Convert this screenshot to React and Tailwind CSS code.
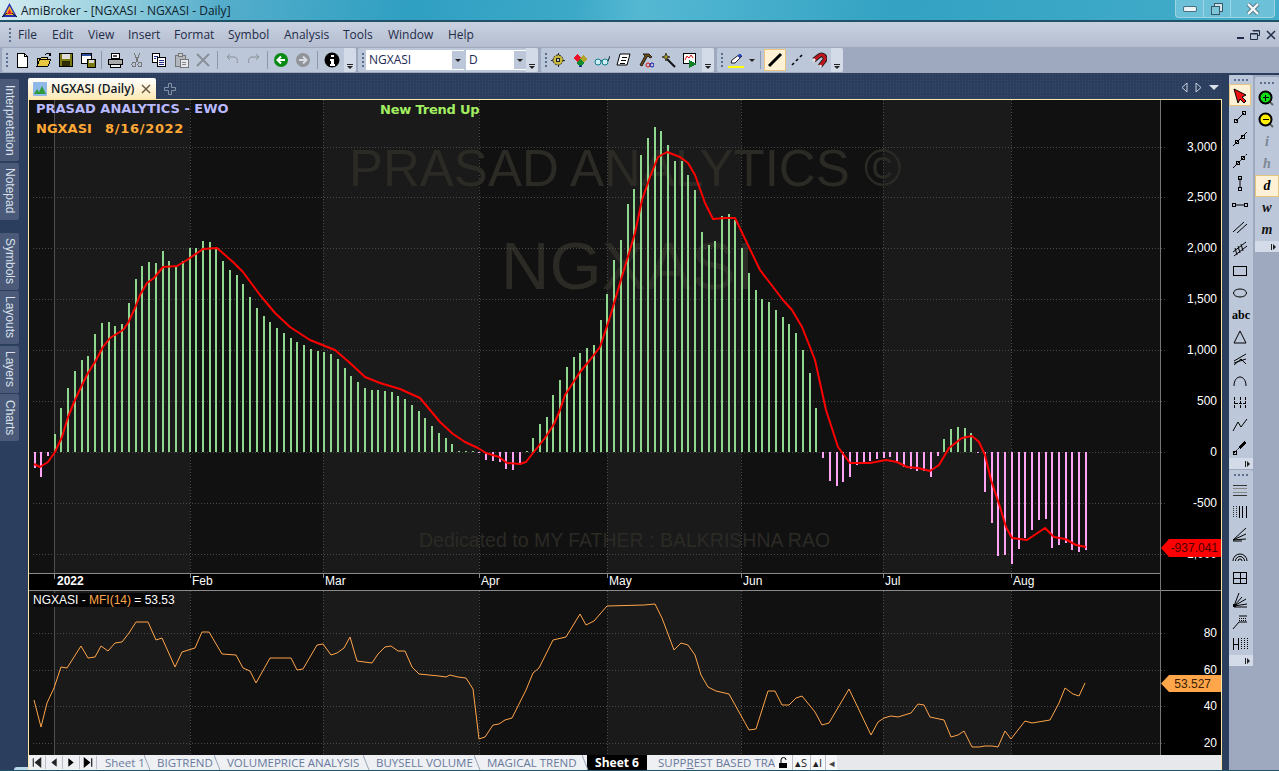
import React from 'react';

// y of the far end of every EWO bar, zero line sits at y=452
const BARS = [468,477,456,434,408,388,371,360,356,334,323,322,326,324,303,279,266,262,263,251,261,266,261,248,248,241,242,249,261,270,275,284,297,308,316,322,328,333,338,342,345,349,351,352,354,359,368,376,382,388,390,390,391,392,396,399,405,411,418,426,433,438,444,451,451,451,453,460,461,462,469,470,465,451,438,424,417,395,380,367,357,353,348,345,320,294,260,240,204,189,155,138,127,131,145,161,161,175,190,232,245,241,216,214,220,248,273,290,299,302,310,317,324,333,350,373,408,458,481,486,482,477,465,463,461,459,458,457,462,467,469,471,471,477,456,439,429,427,428,433,453,492,523,556,555,564,549,538,530,520,519,548,545,543,550,552,550];

const SIGNAL = '34,464 40,467 48,462 55,452 62,437 68,417 75,400 82,385 88,373 95,362 103,347 110,338 123,330 128,323 135,308 140,295 147,283 154,278 163,267 177,266 187,260 203,249 217,248 233,262 243,272 260,295 275,313 290,327 310,340 335,350 350,363 365,377 380,383 400,389 420,398 440,422 453,434 465,442 478,448 486,453 499,457 507,463 520,464 526,462 533,453 545,438 554,424 560,410 565,395 580,372 590,360 600,347 610,317 623,273 635,233 642,200 650,177 658,157 667,152 680,157 688,163 695,175 705,203 713,219 725,218 735,218 747,243 760,270 770,283 783,300 792,310 802,327 808,342 815,360 826,410 838,447 850,463 870,463 886,460 897,462 907,467 918,468 930,471 939,465 949,448 962,438 972,436 979,442 985,455 991,480 1000,507 1006,527 1012,538 1027,540 1045,528 1054,537 1065,539 1076,545 1086,547';

const MFI = '34,700 41,727 47,703 54,688 61,667 67,668 81,646 88,658 95,657 101,646 108,651 115,643 122,642 129,633 136,622 148,622 156,640 162,638 175,667 182,652 195,648 202,632 209,632 222,654 236,655 243,668 250,671 256,683 270,658 291,658 297,670 303,669 317,645 323,644 331,655 337,653 344,648 350,637 357,661 372,663 378,654 385,647 391,646 398,651 405,651 412,667 419,674 429,675 439,676 446,677 450,675 458,677 466,678 473,689 479,739 485,737 493,725 499,724 505,720 512,718 526,690 533,673 539,668 553,640 566,637 580,614 586,625 594,621 607,606 644,605 655,604 662,618 674,650 681,643 688,645 695,655 701,675 708,687 716,691 729,694 749,730 756,729 768,691 775,691 782,705 789,705 796,698 802,696 815,712 822,725 829,723 849,689 871,735 878,722 884,718 891,716 898,717 911,713 918,704 924,705 930,717 944,720 951,737 958,735 964,731 972,747 979,747 985,746 992,746 998,747 1005,731 1011,739 1025,721 1032,723 1050,720 1059,703 1065,688 1073,694 1079,696 1085,683';

const MONTHS = [[190, 'Feb'], [323, 'Mar'], [479, 'Apr'], [607, 'May'], [741, 'Jun'], [883, 'Jul'], [1011, 'Aug']];
const DARK_BANDS = [[29, 54], [190, 323], [479, 607], [741, 883], [1011, 1160]];
const CHART_FONT = "font-['Liberation_Sans',sans-serif]";

function Grip({ vertical }) {
  return (
    <div className={vertical ? 'flex h-[9px] items-center justify-center gap-[2px]' : 'flex w-[9px] flex-col items-center justify-center gap-[2px]'}>
      {[0, 1, 2, 3].map((i) => <span key={i} className="h-[2px] w-[2px] bg-[#5d6f8e]" />)}
    </div>
  );
}

function Chevron({ className }) {
  return (
    <div className={`flex w-[12px] flex-col items-center justify-end self-stretch rounded-r-[2px] bg-[#d3dae8] pb-[3px] ${className || ''}`}>
      <span className="mb-[1px] h-[1px] w-[6px] bg-[#222]" />
      <span className="h-0 w-0 border-x-[3px] border-t-[3px] border-x-transparent border-t-[#222]" />
    </div>
  );
}

function SideChevron() {
  return (
    <div className="flex h-[11px] items-center justify-end gap-[1px] bg-[#d3dae8] pr-[3px]">
      <span className="h-[6px] w-[1px] bg-[#222]" />
      <span className="h-0 w-0 border-y-[3px] border-l-[3px] border-y-transparent border-l-[#222]" />
    </div>
  );
}

function Sep({ wide }) {
  return <span className={`h-[18px] w-[1px] bg-[#8d99ae] ${wide ? 'mx-[3px]' : 'mx-[2px]'}`} />;
}

function Icon({ children, w = 22, active }) {
  return (
    <div
      className={`flex h-[22px] shrink-0 items-center justify-center ${active ? 'border border-[#e6c67e] bg-[#fff1d6]' : ''}`}
      style={{ width: w }}
    >
      <svg width="16" height="16" viewBox="0 0 16 16" fill="none" shapeRendering="crispEdges">{children}</svg>
    </div>
  );
}

function Toolbar({ children, className }) {
  return <div className={`flex h-[24px] items-center rounded-[2px] bg-[#bcc7d9] ${className}`}>{children}</div>;
}

function Combo({ text, width }) {
  return (
    <div className="flex h-[20px] items-center bg-white pl-[3px] text-[12px] text-[#1d2a55]" style={{ width }}>
      <span className="flex-1">{text}</span>
      <span className="flex h-[18px] w-[12px] items-center justify-center bg-[#bcc7d9]">
        <span className="h-0 w-0 border-x-[3px] border-t-[3px] border-x-transparent border-t-[#222]" />
      </span>
    </div>
  );
}

function TopToolbars() {
  return (
    <div className="flex h-[26px] items-center bg-[#9ea9c0] pl-[2px]">
      <Toolbar className="w-[354px]">
        <Grip />
        <Icon><path d="M3 1h7l3 3v11H3z" fill="#fff" stroke="#000" /><path d="M10 1v3h3" stroke="#000" /></Icon>
        <Icon><path d="M1 6h4l1-1h5v2H4L1 14z" fill="#f2d860" stroke="#000" /><path d="M4 7h11l-3 7H1z" fill="#e8c840" stroke="#000" /><path d="M9 3l2-2h3v3M13 1v3" stroke="#000" /></Icon>
        <Icon><rect x="1.5" y="1.5" width="13" height="13" fill="#7a7a10" stroke="#000" /><rect x="4" y="2" width="8" height="5" fill="#ddd" /><rect x="4" y="9" width="8" height="5" fill="#2c2c00" /></Icon>
        <Icon><rect x="1.5" y="1.5" width="10" height="10" fill="#fff" stroke="#000" /><rect x="2" y="2" width="9" height="2" fill="#2b4fa0" /><rect x="7.5" y="7.5" width="8" height="8" fill="#7a7a10" stroke="#000" /><rect x="9" y="8" width="5" height="3" fill="#ddd" /></Icon>
        <Sep />
        <Icon><path d="M4 1h8v5H4z" fill="#fff" stroke="#000" /><path d="M1 7h14v5H1z" fill="#aaa" stroke="#000" /><path d="M3 12h10v3H3z" fill="#eee" stroke="#000" /><path d="M6 3h4M6 4h4" stroke="#555" /></Icon>
        <Icon><path d="M5 1l4 9M11 1L7 10" stroke="#777" /><circle cx="5" cy="12.5" r="2" stroke="#777" /><circle cx="11" cy="12.5" r="2" stroke="#777" /></Icon>
        <Icon><path d="M1.5 1.5h7v9h-7z" fill="#fff" stroke="#000" /><path d="M6.5 5.5h8v9h-8z" fill="#fff" stroke="#000" /><path d="M3 4h4M3 6h2M8 8h5M8 10h5M8 12h5" stroke="#1a2a80" /></Icon>
        <Icon><path d="M2 3h10v11H2z" fill="#b3b7be" stroke="#777" /><path d="M5 1h4v3H5z" fill="#ccc" stroke="#777" /><path d="M7 7h8v8H7z" fill="#e6e8ec" stroke="#777" /><path d="M9 10h4M9 12h4" stroke="#888" /></Icon>
        <Icon><path d="M2 2l12 12M14 2L2 14" stroke="#8a8f98" strokeWidth="2" shapeRendering="auto" /></Icon>
        <Sep wide />
        <Icon><path d="M3 5l3-3M3 5l3 3M3 5h7c3 0 4 3 3 6" stroke="#8b8f98" shapeRendering="auto" /></Icon>
        <Icon><path d="M13 5l-3-3M13 5l-3 3M13 5H6c-3 0-4 3-3 6" stroke="#8b8f98" shapeRendering="auto" /></Icon>
        <Sep />
        <Icon><circle cx="8" cy="8" r="7" fill="#0a8a14" shapeRendering="auto" /><path d="M12 8H5M8 4.5L4.5 8 8 11.5" stroke="#fff" strokeWidth="2" shapeRendering="auto" /></Icon>
        <Icon><circle cx="8" cy="8" r="7" fill="#909499" shapeRendering="auto" /><path d="M4 8h7M8 4.5L11.5 8 8 11.5" stroke="#d9dce2" strokeWidth="2" shapeRendering="auto" /></Icon>
        <Sep wide />
        <Icon><circle cx="8" cy="8" r="7.5" fill="#000" shapeRendering="auto" /><path d="M7 3h2.5v2H7zM6 7h3.5v5H11v1.5H6V12h1V8.5H6z" fill="#fff" /></Icon>
        <div className="flex-1" />
        <Chevron />
      </Toolbar>
      <Toolbar className="ml-[2px] w-[180px]">
        <div className="w-[8px]"><Grip /></div>
        <Combo text="NGXASI" width={98} />
        <div className="w-[2px]" />
        <Combo text="D" width={60} />
        <div className="flex-1" />
        <Chevron />
      </Toolbar>
      <Toolbar className="ml-[3px] w-[173px]">
        <div className="w-[6px]"><Grip /></div>
        <Icon><circle cx="8" cy="8" r="5" fill="#c9b93a" stroke="#222" strokeDasharray="2 1" shapeRendering="auto" /><circle cx="8" cy="8" r="2" fill="#bcc7d9" stroke="#222" /><path d="M8 1v2M8 13v2M1 8h2M13 8h2" stroke="#222" /></Icon>
        <Icon><path d="M5 2l4 4-4 4-4-4z" fill="#e8122a" /><path d="M11 3l4 4-4 4-4-4z" fill="#b2a226" /><path d="M8 7l4 4-4 4-4-4z" fill="#0d8a2e" /><path d="M8 13l2 2H6z" fill="#1a2ca0" /></Icon>
        <Icon><circle cx="4" cy="10" r="3" fill="#cfeef2" stroke="#0e7f8a" shapeRendering="auto" /><circle cx="11" cy="10" r="3" fill="#cfeef2" stroke="#0e7f8a" shapeRendering="auto" /><path d="M14 9l2-5M7 9h1" stroke="#123" shapeRendering="auto" /></Icon>
        <Icon><path d="M4 2h10l-3 11H1z" fill="#fff" stroke="#000" shapeRendering="auto" /><path d="M6 5h5M5 8h5M4 11h5" stroke="#000" /></Icon>
        <Icon><path d="M5 2h6l3 3-2 1-2-2-1 1-5 9-2-1 5-9z" fill="#6b4a10" stroke="#222" shapeRendering="auto" /><circle cx="10" cy="13" r="2" stroke="#d11" shapeRendering="auto" /><circle cx="14" cy="13" r="2" stroke="#11a" shapeRendering="auto" /></Icon>
        <Icon><path d="M7 7l8 8" stroke="#111" strokeWidth="2" shapeRendering="auto" /><path d="M6 1l1 3 3 1-3 1-1 3-1-3-3-1 3-1z" fill="#a89a20" stroke="#443" shapeRendering="auto" /></Icon>
        <Icon><rect x="1.5" y="1.5" width="12" height="10" fill="#fff" stroke="#000" /><path d="M3 8l2-4 2 2 2-3 2 3" stroke="#d11" shapeRendering="auto" /><path d="M7 8l8 4-8 4z" fill="#12802a" /></Icon>
        <div className="flex-1" />
        <Chevron />
      </Toolbar>
      <Toolbar className="ml-[3px] w-[126px]">
        <div className="w-[8px]"><Grip /></div>
        <Icon><path d="M3 11l1-3 8-6 2 2-7 7z" fill="#fff" stroke="#223" shapeRendering="auto" /><path d="M9 4l2 2 3-2-2-2z" fill="#2a4ac0" /><rect x="0" y="14" width="16" height="2" fill="#ffff00" /></Icon>
        <div className="flex w-[10px] justify-center"><span className="h-0 w-0 border-x-[3px] border-t-[3px] border-x-transparent border-t-[#222]" /></div>
        <span className="mx-[3px] h-[18px] w-[1px] bg-[#8d99ae]" />
        <Icon active><path d="M2 14L14 2" stroke="#000" strokeWidth="3" shapeRendering="auto" /></Icon>
        <Icon><path d="M3 13l2-2M7 9l2-2M11 5l2-2" stroke="#000" strokeWidth="1.6" shapeRendering="auto" /></Icon>
        <Icon>
          <path d="M3 8L8 4a3.500 3.500 0 0 1 5 5l-4 5" stroke="#222" strokeWidth="5" shapeRendering="auto" />
          <path d="M3 8L8 4a3.500 3.500 0 0 1 5 5l-4 5" stroke="#c2141c" strokeWidth="3" shapeRendering="auto" />
          <path d="M2 9l2-2M9 15l1-2" stroke="#e8e8e8" strokeWidth="2.500" shapeRendering="auto" />
        </Icon>
        <div className="flex-1" />
        <Chevron />
      </Toolbar>
    </div>
  );
}

function SheetTabs() {
  const tabs = [
    ['Sheet 1', 52],
    ['BIGTREND', 70],
    ['VOLUMEPRICE ANALYSIS', 149],
    ['BUYSELL VOLUME', 111],
    ['MAGICAL TREND', 108],
  ];
  return (
    <div className="flex h-[15px] items-center overflow-hidden whitespace-nowrap bg-[#eef0f4] text-[11.5px] leading-[15px] text-[#687a9c]">
      {[
        <path key="a" d="M2 2v8M9 2L4 6l5 4z" fill="#222" stroke="#222" />,
        <path key="b" d="M8 2L3 6l5 4z" fill="#222" />,
        <path key="c" d="M3 2l5 4-5 4z" fill="#000" />,
        <path key="d" d="M9 2v8M2 2l5 4-5 4z" fill="#000" stroke="#000" />,
      ].map((p, i) => (
        <svg key={i} width="17" height="13" viewBox="-2 0 15 12" className="shrink-0 border-r border-[#b9bec8]">{p}</svg>
      ))}
      {tabs.map(([name, w]) => (
        <div key={name} className="relative shrink-0 pl-[8px]" style={{ width: w }}>
          {name}
          <svg width="7" height="15" viewBox="0 0 7 15" className="absolute right-[-2px] top-0"><path d="M0 0l6 15" stroke="#9aa4b5" fill="none" /></svg>
        </div>
      ))}
      <div className="h-[15px] w-[60px] shrink-0 bg-black text-center text-[12px] font-bold text-white">Sheet 6</div>
      <div className="w-[128px] shrink-0 overflow-hidden pl-[11px]">SUPP<span className="underline">R</span>EST BASED TRA</div>
      <div className="flex h-[15px] items-center gap-[3px] bg-[#f6f7f9] pl-[2px] text-[11px] text-[#222]">
        <svg width="12" height="12" viewBox="0 0 12 12"><rect x="2" y="6" width="8" height="5" fill="#000" /><path d="M4 6V3a2.5 2.5 0 0 1 5 0" stroke="#000" fill="none" /></svg>
        <span className="border-l border-[#b9bec8] pl-[2px]">▴S</span>
        <span className="border-l border-[#b9bec8] pl-[2px]">▴I</span>
        <span className="border-l border-[#b9bec8] pl-[3px] pr-[2px] text-[#444]">◂</span>
      </div>
      <div className="h-full flex-1 bg-[#e6e8ec]" />
    </div>
  );
}

function Bands({ y, h }) {
  return (
    <>
      <rect x="29" y={y} width="1131" height={h} fill="#1a1a1a" />
      {DARK_BANDS.map(([a, b]) => <rect key={a} x={a} y={y} width={b - a} height={h} fill="#111111" />)}
      <line x1="54.5" x2="54.5" y1={y} y2={y + h} stroke="#4f4f4f" />
      {MONTHS.map(([x]) => <line key={x} x1={x + 0.5} x2={x + 0.5} y1={y} y2={y + h} stroke="#4a4a4a" strokeDasharray="1 2" />)}
    </>
  );
}

function Levels({ rows }) {
  return rows.map(([y, label]) => (
    <g key={label}>
      <line x1="33" x2="1165" y1={y + 0.5} y2={y + 0.5} stroke="#4a4a4a" strokeDasharray="1 2" />
      <text x="1217" y={y + 4} textAnchor="end" fontSize="12" fill="#fff">{label}</text>
    </g>
  ));
}

function MainPane() {
  return (
    <svg viewBox="29 100 1192 473" className={`block h-[473px] w-[1192px] shrink-0 bg-black ${CHART_FONT}`}>
      <Bands y={100} h={473} />
      <g fill="#2b2a25">
        <text x="349" y="186" fontSize="51">PRASAD ANALYTICS ©</text>
        <text x="501" y="289" fontSize="67">NGXASI</text>
        <text x="419" y="547" fontSize="19.500">Dedicated to MY FATHER : BALKRISHNA RAO</text>
      </g>
      <Levels rows={[[147, '3,000'], [197, '2,500'], [248, '2,000'], [299, '1,500'], [350, '1,000'], [401, '500'], [452, '0'], [503, '-500'], [554, '-1,000']]} />
      {BARS.map((v, i) => {
        const x = Math.round(34.5 + i * 6.74) - 1;
        return v < 452
          ? <rect key={i} x={x} y={v} width="2" height={452 - v} fill="#8fd68f" />
          : <rect key={i} x={x} y={452} width="2" height={v - 452} fill="#ffa4f4" />;
      })}
      <polyline points={SIGNAL} fill="none" stroke="#ff0000" strokeWidth="2" strokeLinejoin="round" />
      <path d="M1221 539v18h-52l-8-9 8-9z" fill="#ff0000" />
      <text x="1218" y="552" textAnchor="end" fontSize="12" fill="#4a0000">-937.041</text>
      <line x1="1160.5" x2="1160.5" y1="100" y2="573" stroke="#757575" />
      <g fontFamily="'DejaVu Sans', sans-serif" fontWeight="700" fontSize="13">
        <text x="36" y="113" fill="#b9b9ff">PRASAD ANALYTICS - EWO</text>
        <text x="36" y="133" fill="#ffa836">NGXASI<tspan x="105" letterSpacing="0.7">8/16/2022</tspan></text>
        <text x="380" y="114" fill="#a3ef62" letterSpacing="-0.2">New Trend Up</text>
      </g>
    </svg>
  );
}

function DateAxis() {
  return (
    <svg viewBox="29 573 1192 18" className={`block h-[18px] w-[1192px] shrink-0 bg-black ${CHART_FONT}`}>
      <line x1="29" x2="1160" y1="573.5" y2="573.5" stroke="#8a8a8a" />
      <line x1="29" x2="1221" y1="590.5" y2="590.5" stroke="#8a8a8a" />
      <line x1="1160.5" x2="1160.5" y1="573" y2="591" stroke="#757575" />
      <line x1="54.5" x2="54.5" y1="573" y2="579" stroke="#8a8a8a" />
      <text x="57" y="585" fontSize="12" fontWeight="700" fill="#fff">2022</text>
      {MONTHS.map(([x, m]) => (
        <g key={m}>
          <line x1={x + 0.5} x2={x + 0.5} y1="573" y2="578" stroke="#8a8a8a" />
          <text x={x + 2} y="585" fontSize="12" fill="#fff">{m}</text>
        </g>
      ))}
    </svg>
  );
}

function MfiPane() {
  return (
    <svg viewBox="29 591 1192 164" className={`block h-[164px] w-[1192px] shrink-0 bg-black ${CHART_FONT}`}>
      <Bands y={591} h={164} />
      <Levels rows={[[633, '80'], [670, '60'], [706, '40'], [743, '20']]} />
      <polyline points={MFI} fill="none" stroke="#ffa54a" strokeWidth="1" strokeLinejoin="round" />
      <rect x="33" y="593" width="139" height="14" fill="#050505" />
      <text x="33" y="604" fontSize="12" fill="#fff">NGXASI - <tspan fill="#ffa54a">MFI(14)</tspan> = 53.53</text>
      <path d="M1221 675v17h-52l-8-8.500 8-8.500z" fill="#ffa54a" />
      <text x="1211" y="688" textAnchor="end" fontSize="12" fill="#3a2000">53.527</text>
      <line x1="1160.5" x2="1160.5" y1="591" y2="755" stroke="#757575" />
    </svg>
  );
}

function LeftDock() {
  const groups = [
    [['Interpretation', 82], ['Notepad', 57]],
    [['Symbols', 57], ['Layouts', 53], ['Layers', 47], ['Charts', 47]],
  ];
  return (
    <div className="flex w-[28px] shrink-0 flex-col pt-[6px]">
      {groups.map((tabs, g) => (
        <div key={g} className={`flex flex-col gap-[1.5px] ${g ? 'mt-[13px]' : ''}`}>
          {tabs.map(([name, h]) => (
            <div
              key={name}
              className={`flex w-[19px] items-center justify-center rounded-r-[2px] bg-[#4a5a78] text-[12px] text-[#d9e0ec] [writing-mode:vertical-rl] ${CHART_FONT}`}
              style={{ height: h }}
            >
              {name}
            </div>
          ))}
        </div>
      ))}
      <div className="ml-[14px] mt-auto h-[3px] w-[14px] rounded-tl-full bg-[#b9d9e8]" />
    </div>
  );
}

function DrawTools() {
  const s = { stroke: '#000', fill: 'none', shapeRendering: 'auto' };
  return (
    <div className="w-[24px] overflow-hidden rounded-t-[2px] bg-[#bcc7d9]">
      <Grip vertical />
      <Icon active><path d="M2 2l12 6-4 2 4 4-2 2-4-4-2 4z" fill="#ee1111" stroke="#000" shapeRendering="auto" /></Icon>
      <Icon><path d="M4 12l8-8" {...s} /><rect x="2.500" y="10.500" width="3" height="3" {...s} /><rect x="10.500" y="2.500" width="3" height="3" {...s} /></Icon>
      <Icon><path d="M1 15L15 1" {...s} /><rect x="3.500" y="9.500" width="3" height="3" {...s} /><rect x="9.500" y="4.500" width="3" height="3" {...s} /></Icon>
      <Icon><path d="M1 15L15 1" {...s} strokeDasharray="5 1" /><rect x="4.500" y="8.500" width="3" height="3" {...s} /><rect x="9.500" y="3.500" width="3" height="3" {...s} /></Icon>
      <Icon><path d="M8 3v10" {...s} /><rect x="6.500" y="1.500" width="3" height="3" {...s} /><rect x="6.500" y="12.500" width="3" height="3" {...s} /></Icon>
      <Icon><path d="M3 8h10" {...s} /><rect x="0.500" y="6.500" width="3" height="3" {...s} /><rect x="12.500" y="6.500" width="3" height="3" {...s} /></Icon>
      <Icon><path d="M1 13L12 3M5 14L15 5" {...s} /></Icon>
      <Icon><path d="M1 11L14 1M2 15L15 5M3 7l2 7M6 5l2 7M9 3l2 7" {...s} /></Icon>
      <Icon><rect x="1.500" y="3.500" width="13" height="9" stroke="#000" /></Icon>
      <Icon><ellipse cx="8" cy="8" rx="6.500" ry="4" {...s} /></Icon>
      <div className="flex h-[22px] items-center justify-center font-['Liberation_Serif',serif] text-[12px] font-bold leading-none text-black">abc</div>
      <Icon><path d="M8 2l6 12H2z" {...s} /></Icon>
      <Icon><path d="M2 10L14 3M2 12l12-4M2 14l7-6 5 5" {...s} /></Icon>
      <Icon><path d="M2 13c0-12 12-12 12 0" {...s} /></Icon>
      <Icon><path d="M2.500 2v12M13.500 2v12M8 2v12M3 8h10" stroke="#000" strokeDasharray="3 1" /></Icon>
      <Icon><path d="M1 14l5-9 3 5 6-8" {...s} /></Icon>
      <Icon><path d="M2 14l5-5" {...s} strokeDasharray="2 1" /><path d="M6 8l6-6 2 2-6 6z" fill="#000" /><rect x="1.500" y="12.500" width="3" height="3" {...s} /></Icon>
      <SideChevron />
    </div>
  );
}

function GridTools() {
  const s = { stroke: '#000', fill: 'none', shapeRendering: 'auto' };
  return (
    <div className="mt-[1px] w-[24px] overflow-hidden rounded-t-[2px] bg-[#bcc7d9]">
      <Grip vertical />
      <Icon><path d="M1 3h14M1 13h14" stroke="#333" /><path d="M1 6.500h14M1 10h14" stroke="#888" /></Icon>
      <Icon><path d="M1 2v12M4 2v12" stroke="#333" strokeDasharray="1 1" /><path d="M7 2v12M10 2v12M14 2v12" stroke="#000" /></Icon>
      <Icon><path d="M1 14L14 2M1 14l13-6M1 14l13-1M1 15h9" {...s} /></Icon>
      <Icon><path d="M1 13a7 7 0 0 1 14 0M3.500 13a4.500 4.500 0 0 1 9 0M6 13a2 2 0 0 1 4 0" {...s} /></Icon>
      <Icon><rect x="1.500" y="2.500" width="13" height="11" stroke="#000" /><path d="M8 3v10M2 8h12" stroke="#000" /></Icon>
      <Icon><path d="M2 14L7 1M2 14l8-9M2 14l12-7M2 14l13-2M2 15h13" {...s} /><rect x="1" y="12" width="3" height="3" fill="#000" /></Icon>
      <Icon><path d="M1 15l6-7h8M7 2h8" {...s} /><path d="M7 4h8M7 6h8" stroke="#000" strokeDasharray="1 1" /></Icon>
      <Icon><path d="M1 2v12M6 2v12M1 8h5" stroke="#000" /><path d="M9 2v12M12 2v12M15 2v12" stroke="#000" strokeDasharray="1 1" /></Icon>
      <SideChevron />
    </div>
  );
}

function ZoomTools() {
  const letter = (t, color) => (
    <span className={`font-['Liberation_Serif',serif] text-[14px] font-bold italic leading-none ${color}`}>{t}</span>
  );
  return (
    <div className="w-[24px] overflow-hidden rounded-t-[2px] bg-[#bcc7d9]">
      <div className="h-[1px]" />
      <Grip vertical />
      <Icon><path d="M12 12l3 3" stroke="#666" strokeWidth="2" shapeRendering="auto" /><circle cx="7.500" cy="7.500" r="6" fill="#11e011" stroke="#000" strokeWidth="2" shapeRendering="auto" /><path d="M4.500 7.500h6M7.500 4.500v6" stroke="#000" /></Icon>
      <Icon><path d="M12 12l3 3" stroke="#666" strokeWidth="2" shapeRendering="auto" /><circle cx="7.500" cy="7.500" r="6" fill="#ffee00" stroke="#000" strokeWidth="2" shapeRendering="auto" /><path d="M4.500 7.500h6" stroke="#000" /></Icon>
      <div className="flex h-[22px] items-center justify-center">{letter('i', 'text-[#7d8694]')}</div>
      <div className="flex h-[22px] items-center justify-center">{letter('h', 'text-[#7d8694]')}</div>
      <div className="flex h-[22px] items-center justify-center border border-[#e6c67e] bg-[#fff1d6]">{letter('d', 'text-black')}</div>
      <div className="flex h-[22px] items-center justify-center">{letter('w', 'text-[#111]')}</div>
      <div className="flex h-[22px] items-center justify-center">{letter('m', 'text-[#111]')}</div>
      <SideChevron />
    </div>
  );
}

export default function App() {
  return (
    <div className="flex h-[771px] w-[1279px] flex-col overflow-hidden bg-[#2c3e5e] font-['Open_Sans','Liberation_Sans',sans-serif] text-[12px]">
      {/* window frame */}
      <div className="flex h-[22px] shrink-0 items-start border-b-2 border-[#1f5266] bg-[linear-gradient(100deg,#d5ecf0_0%,#97d0df_9%,#55aecb_17%,#2f9fc2_32%,#3da9c8_45%,#55b8d3_50%,#33a2c3_70%,#44adca_100%)]">
        <svg width="17" height="17" viewBox="0 0 17 17" className="ml-[1px] mt-[2px] shrink-0">
          <path d="M8.500 1L16 15H1z" fill="#2632b5" />
          <path d="M8.500 4l5 9h-10z" fill="#f0b020" />
          <path d="M8.500 7l2.500 5H6z" fill="#e02030" />
          <path d="M1 15l5-4M16 15l-5-4" stroke="#111" />
        </svg>
        <div className="ml-[3px] mt-[3px] text-[12px] leading-[15px] text-[#10202a]">AmiBroker - [NGXASI - NGXASI - Daily]</div>
        <div className="ml-auto mr-[4px] flex h-[18px] w-[100px] overflow-hidden rounded-b-[4px] border border-t-0 border-[#9fd4e2] bg-[#6cc0d8]">
          <div className="flex w-[28px] items-center justify-center border-r border-[#9fd4e2]"><span className="h-[4px] w-[12px] rounded-[1px] bg-[#eef4f6] ring-1 ring-[#4a6f80]" /></div>
          <div className="flex w-[27px] items-center justify-center border-r border-[#9fd4e2]">
            <svg width="12" height="12" viewBox="0 0 12 12"><rect x="3.500" y="0.500" width="8" height="8" fill="#cfe3ea" stroke="#3a5a6a" /><rect x="0.500" y="3.500" width="8" height="8" fill="#7ec6da" stroke="#3a5a6a" /></svg>
          </div>
          <div className="flex flex-1 items-center justify-center">
            <svg width="14" height="12" viewBox="0 0 14 12"><path d="M2 1l10 10M12 1L2 11" stroke="#3a5a6a" strokeWidth="4" /><path d="M2 1l10 10M12 1L2 11" stroke="#eef4f6" strokeWidth="2.500" /></svg>
          </div>
        </div>
      </div>

      {/* menu */}
      <div className="flex h-[25px] shrink-0 items-center bg-[linear-gradient(#c9d1e1,#b4bed0)] pl-[5px] text-[#1f2c48]">
        <Grip />
        <div className="ml-[4px] flex">
          {[['File', 34], ['Edit', 36], ['View', 40], ['Insert', 46], ['Format', 54], ['Symbol', 56], ['Analysis', 59], ['Tools', 45], ['Window', 60], ['Help', 40]].map(([m, w]) => (
            <span key={m} style={{ width: w }}>{m}</span>
          ))}
        </div>
        <div className="ml-auto flex items-center gap-[6px] pr-[3px]">
          <span className="mt-[6px] h-[2px] w-[7px] bg-[#1f2c48]" />
          <svg width="10" height="10" viewBox="0 0 10 10"><path d="M2.500.500h7v5h-2M.500 3.500h7v6h-7z" fill="none" stroke="#1f2c48" /><path d="M3 1h6M1 4h6" stroke="#1f2c48" /></svg>
          <svg width="10" height="10" viewBox="0 0 10 10"><path d="M1 1l8 8M9 1L1 9" stroke="#1f2c48" strokeWidth="1.500" /></svg>
        </div>
      </div>

      <TopToolbars />

      <div className="flex min-h-0 flex-1">
        <LeftDock />

        {/* chart window */}
        <div className="flex w-[1194px] shrink-0 flex-col">
          <div className="flex h-[26px] shrink-0 items-end bg-[#2c3e5e] bg-[radial-gradient(#3a4c6c_1px,transparent_1px)] bg-[length:3px_3px]">
            <div className="flex h-[21px] w-[128px] items-center rounded-t-[2px] bg-[linear-gradient(#ffffff,#fde9b4)] pl-[5px] text-[12px] font-semibold text-[#101828]">
              <svg width="14" height="14" viewBox="0 0 14 14"><rect width="14" height="14" rx="1" fill="#8fb9e8" /><path d="M1 12l3-5 2 3 3-6 4 8z" fill="#2f9a3c" /></svg>
              <span className="ml-[4px]">NGXASI (Daily)</span>
              <svg width="10" height="10" viewBox="0 0 10 10" className="ml-auto mr-[5px]"><path d="M1 1l8 8M9 1L1 9" stroke="#6a5a40" strokeWidth="1.500" /></svg>
            </div>
            <svg width="12" height="12" viewBox="0 0 12 12" className="mb-[4px] ml-[8px]"><path d="M4.500.500h3v4h4v3h-4v4h-3v-4h-4v-3h4z" fill="none" stroke="#8492a8" /></svg>
            <div className="mb-[6px] ml-auto flex items-center gap-[7px] pr-[3px]">
              <svg width="7" height="11" viewBox="0 0 7 11"><path d="M6 1v9L1 5.500z" fill="none" stroke="#c6cfdd" /></svg>
              <svg width="7" height="11" viewBox="0 0 7 11"><path d="M1 1v9l5-4.500z" fill="none" stroke="#c6cfdd" /></svg>
              <span className="h-0 w-0 border-x-[5px] border-t-[5px] border-x-transparent border-t-[#d9e0ea]" />
            </div>
          </div>
          <div className="flex min-h-0 flex-1 flex-col border-x border-t border-[#ffe6a4]">
            <MainPane />
            <DateAxis />
            <MfiPane />
            <SheetTabs />
          </div>
        </div>

        {/* drawing toolbars */}
        <div className="ml-[7px] mt-[2px] flex flex-1 gap-[2px] bg-[#9ea9c0]">
          <div>
            <DrawTools />
            <GridTools />
          </div>
          <div className="mt-[2px]"><ZoomTools /></div>
        </div>
      </div>
      <div className="h-[1px] shrink-0 bg-[#1f5266]" />
    </div>
  );
}
